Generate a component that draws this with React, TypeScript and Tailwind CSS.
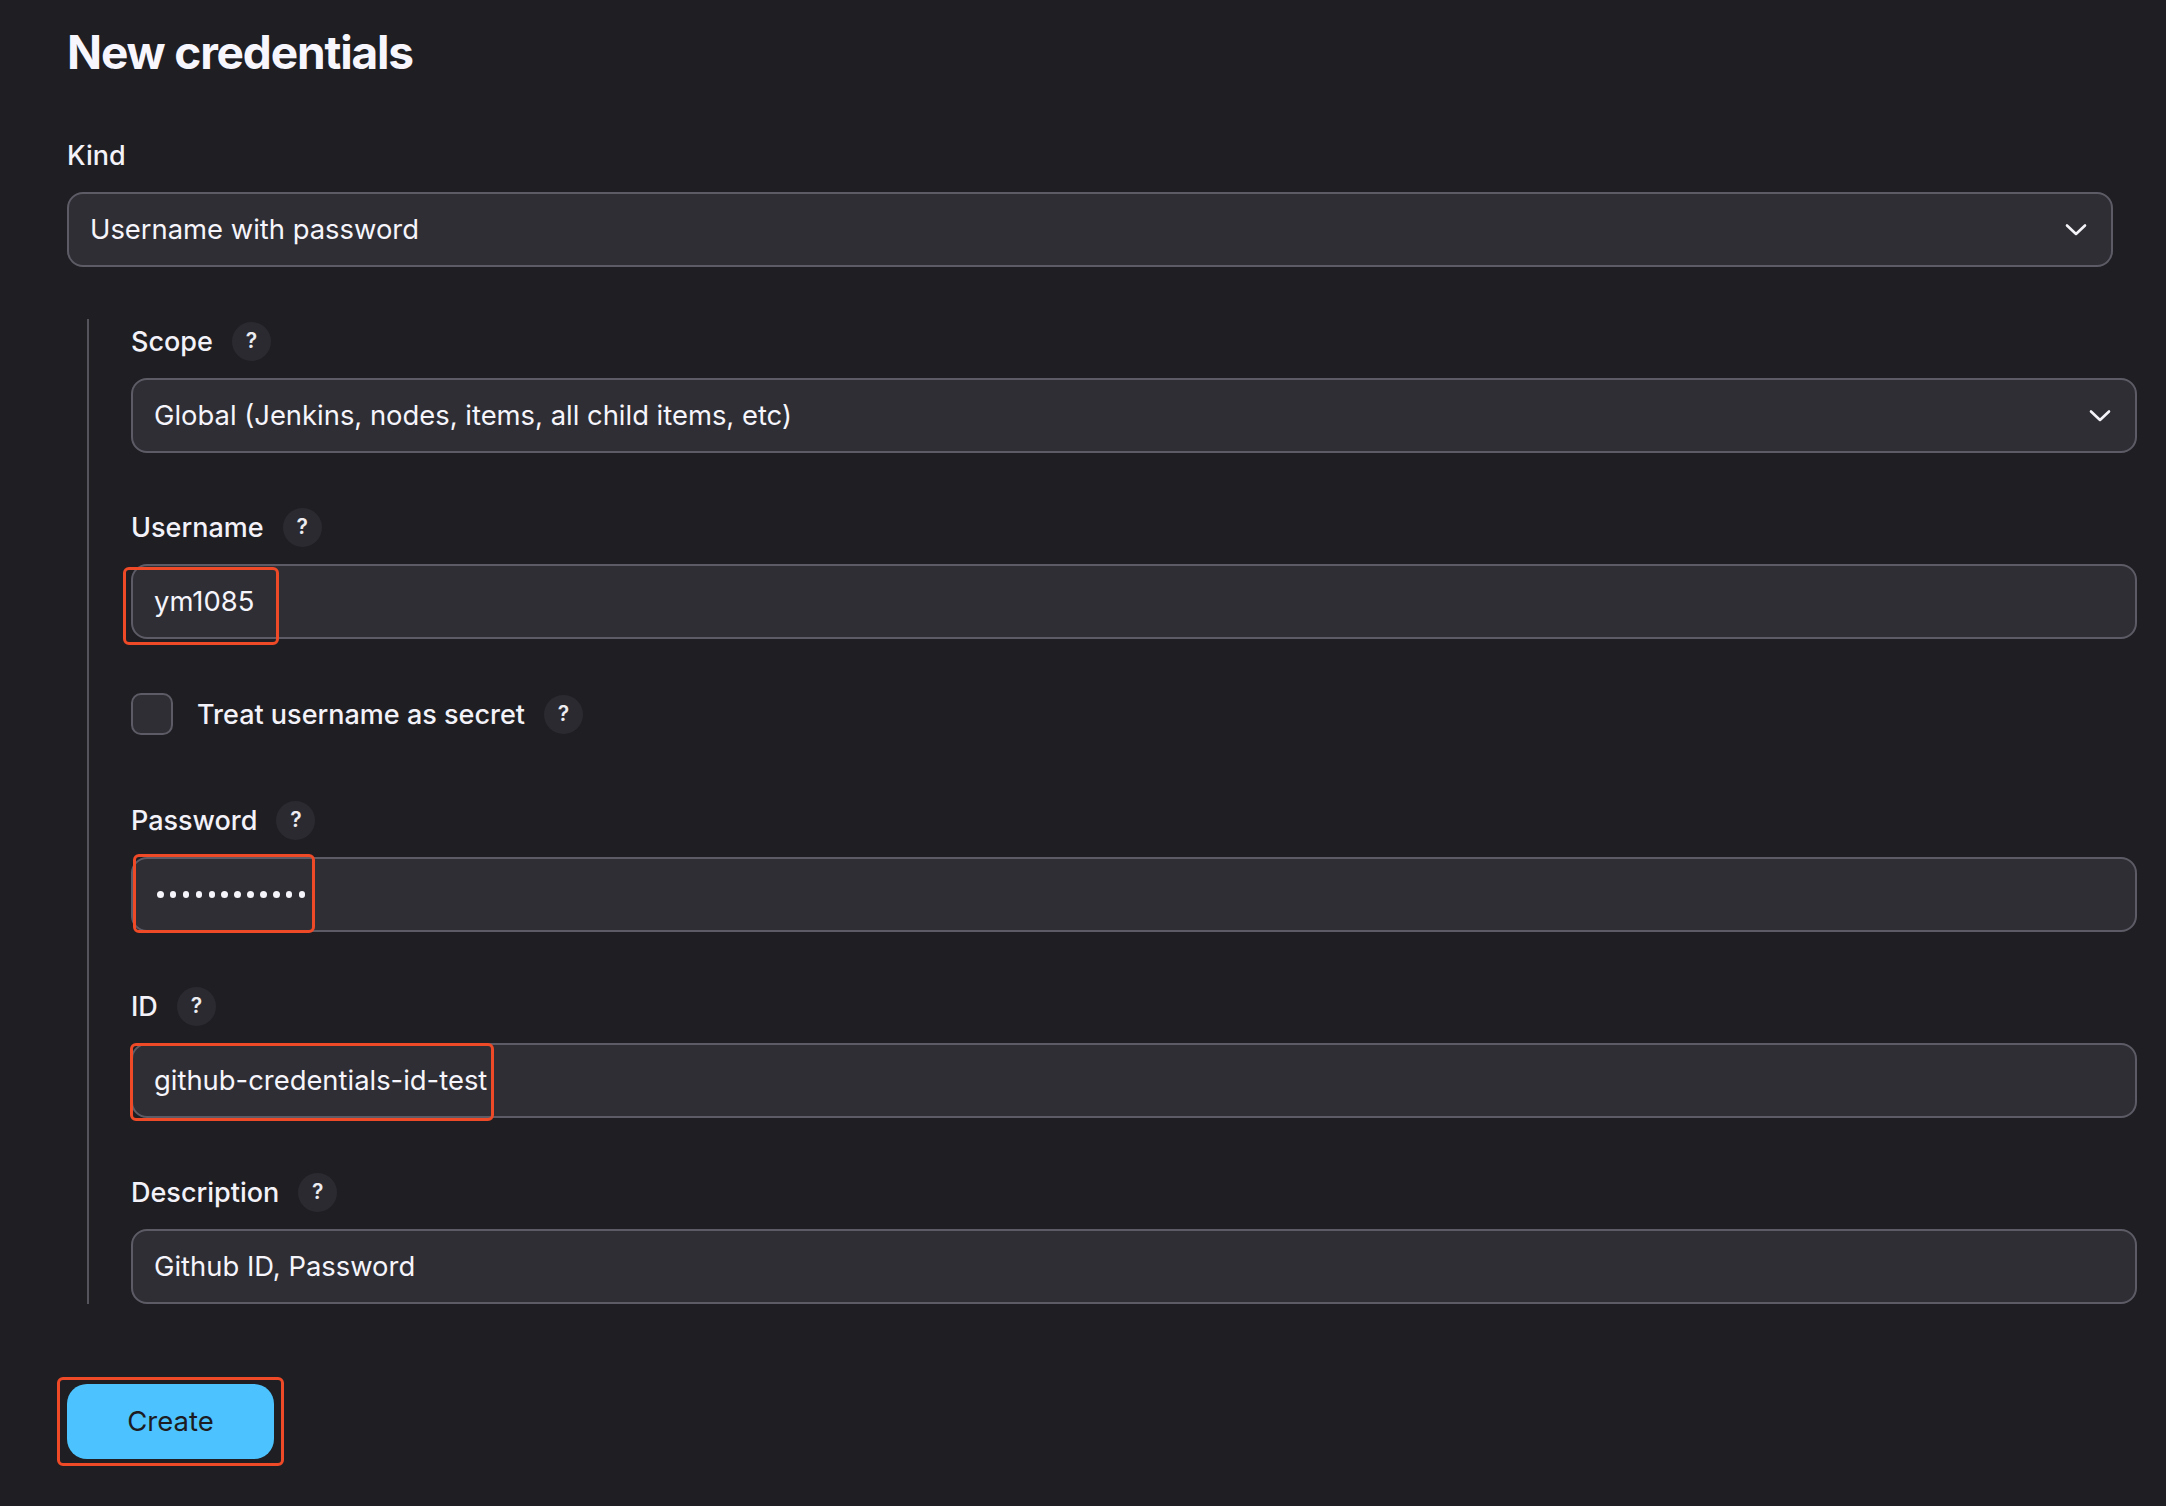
import type { ReactNode } from 'react'

function Help() {
  return (
    <span className="ml-[19px] flex h-[39px] w-[39px] shrink-0 items-center justify-center rounded-full bg-[#2b2a30] text-[21px] font-semibold text-[#ececf1]">
      ?
    </span>
  )
}

function Chevron() {
  return (
    <svg width="24" height="14" viewBox="0 0 24 14" fill="none" className="absolute right-[23px] top-1/2 -translate-y-1/2">
      <polyline points="3,2.5 12,11 21,2.5" stroke="#f4f4f8" strokeWidth="2.6" strokeLinecap="round" strokeLinejoin="round" />
    </svg>
  )
}

function Marker({ className }: { className: string }) {
  // red annotation box drawn over the screenshot
  return <span className={`pointer-events-none absolute rounded-[6px] border-[3px] border-[#ef4a27] ${className}`} />
}

function Label({ text, help = true }: { text: string; help?: boolean }) {
  return (
    <div className="flex h-[40px] items-center">
      <span className="text-[27px] font-medium leading-none text-[#f3f2f8]">{text}</span>
      {help && <Help />}
    </div>
  )
}

function Box({ children, chevron, className = '' }: { children?: ReactNode; chevron?: boolean; className?: string }) {
  return (
    <div className={`relative mt-[17px] flex h-[75px] items-center rounded-[16px] border-2 border-[#5d5c66] bg-[#2f2e35] pl-[21px] text-[27.4px] text-[#f6f5fb] ${className}`}>
      {children}
      {chevron && <Chevron />}
    </div>
  )
}

export default function App() {
  return (
    <div className="min-h-screen w-full bg-[#1f1e23] pl-[67px] pt-[22px] font-[Inter,sans-serif] text-[#f3f2f8]">
      <h1 className="text-[46px] font-bold leading-[60px] tracking-[-0.025em] text-[#f7f6fc]">New credentials</h1>

      <div className="mt-[53px] w-[2046px]">
        <div className="flex h-[40px] items-center">
          <span className="text-[27px] font-medium leading-none">Kind</span>
        </div>
        <Box chevron>Username with password</Box>
      </div>

      <div className="ml-[20px] mt-[52px] w-[2050px] border-l-2 border-[#55545d] pl-[42px] pt-[2px]">
        <Label text="Scope" />
        <Box chevron>Global (Jenkins, nodes, items, all child items, etc)</Box>

        <div className="mt-[54px]">
          <Label text="Username" />
          <Box>
            <span>ym1085</span>
            <Marker className="left-[-10px] top-[1px] h-[78px] w-[156px]" />
          </Box>
        </div>

        <div className="mt-[54px] flex h-[42px] items-center">
          <span className="h-[42px] w-[42px] rounded-[10px] border-2 border-[#5d5c66] bg-[#2f2e35]" />
          <span className="ml-[24px] text-[27px] font-medium leading-none">Treat username as secret</span>
          <Help />
        </div>

        <div className="mt-[65px]">
          <Label text="Password" />
          <Box>
            <span className="ml-[3px] flex gap-[6.4px]">
              {Array.from({ length: 12 }).map((_, i) => (
                <span key={i} className="h-[6.5px] w-[6.5px] rounded-full bg-[#f6f5fb]" />
              ))}
            </span>
            <Marker className="left-[0px] top-[-5px] h-[79px] w-[182px]" />
          </Box>
        </div>

        <div className="mt-[54px]">
          <Label text="ID" />
          <Box>
            <span>github-credentials-id-test</span>
            <Marker className="left-[-3px] top-[-2px] h-[78px] w-[364px]" />
          </Box>
        </div>

        <div className="mt-[54px]">
          <Label text="Description" />
          <Box>Github ID, Password</Box>
        </div>
      </div>

      <div className="relative mt-[80px] inline-block">
        <button className="flex h-[75px] w-[207px] items-center justify-center rounded-[20px] bg-[#4cc3fe] text-[27.5px] text-[#1c1c22]">
          Create
        </button>
        <Marker className="left-[-10px] top-[-7px] h-[89px] w-[227px]" />
      </div>
    </div>
  )
}
